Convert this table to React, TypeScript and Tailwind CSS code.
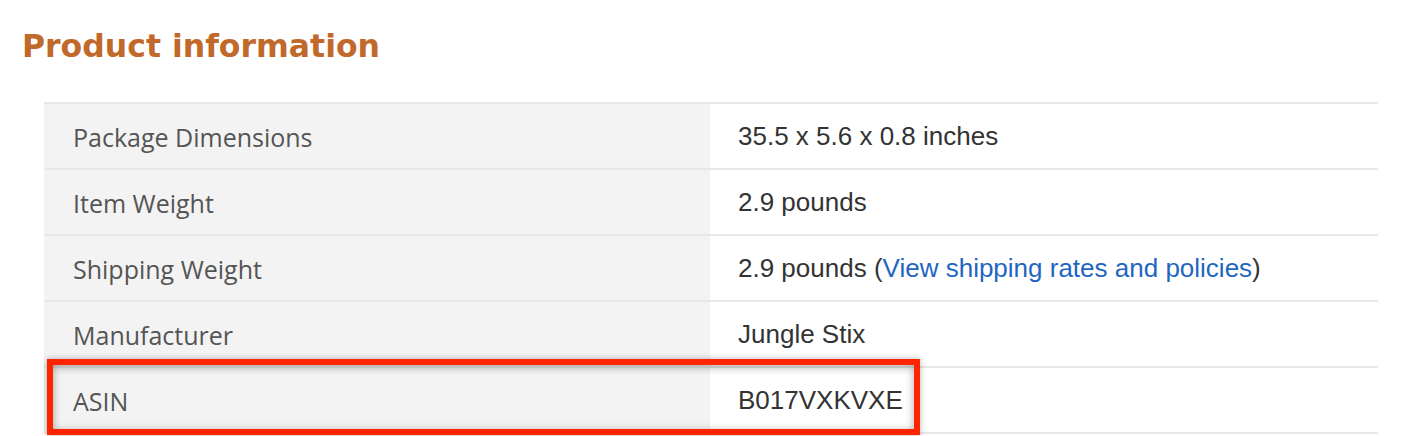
import React from "react";

const rows: { label: string; value: React.ReactNode }[] = [
  { label: "Package Dimensions", value: "35.5 x 5.6 x 0.8 inches" },
  { label: "Item Weight", value: "2.9 pounds" },
  {
    label: "Shipping Weight",
    value: (
      <>
        2.9 pounds (<a className="text-[#1f66c1]">View shipping rates and policies</a>)
      </>
    ),
  },
  { label: "Manufacturer", value: "Jungle Stix" },
  { label: "ASIN", value: "B017VXKVXE" },
];

export default function App() {
  return (
    <div className="relative w-[1416px] h-[436px] bg-white overflow-hidden">
      <h2
        className="pl-[22px] pt-[30px] text-[31.5px] leading-[32px] font-bold text-[#c1692a]"
        style={{ fontFamily: '"DejaVu Sans", Verdana, sans-serif' }}
      >
        Product information
      </h2>
      <table className="ml-[44px] mt-[40px] w-[1334px] border-collapse">
        <tbody>
          {rows.map((r) => (
            <tr key={r.label} className="h-[66px] border-y-2 border-[#e8e8e8]">
              <td
                className="w-[666px] bg-[#f3f3f3] pl-[29px] pt-[3px] text-[25px] text-[#555555] align-middle"
                style={{ fontFamily: '"Open Sans", sans-serif' }}
              >
                {r.label}
              </td>
              <td
                className="pl-[28px] pt-[1px] text-[26px] text-[#333333] align-middle"
                style={{ fontFamily: '"Liberation Sans", Arial, sans-serif' }}
              >
                {r.value}
              </td>
            </tr>
          ))}
        </tbody>
      </table>
      <div className="absolute left-[47px] top-[359px] w-[873px] h-[76px] border-[6px] border-[#ff2400] shadow-[0_0_6px_rgba(0,0,0,0.3),inset_0_2px_8px_rgba(0,0,0,0.35)]" />
    </div>
  );
}
